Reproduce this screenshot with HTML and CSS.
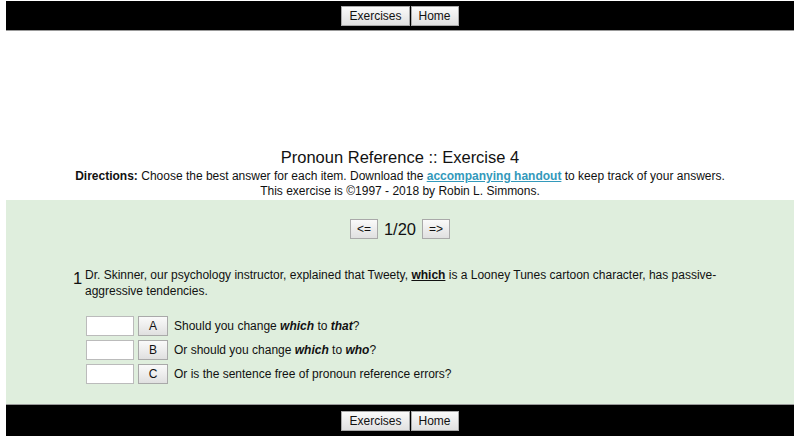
FILE: index.html
```html
<!DOCTYPE html>
<html>
<head>
<meta charset="utf-8">
<link rel="stylesheet" href="styles.css">
</head>
<body>
<div class="page">
  <div class="navbar">
    <button class="btn">Exercises</button><button class="btn">Home</button>
  </div>
  <div class="header">
    <h1 class="title">Pronoun Reference :: Exercise 4</h1>
    <p class="line"><b>Directions:</b> Choose the best answer for each item. Download the <a class="link" href="#">accompanying handout</a> to keep track of your answers.</p>
    <p class="line">This exercise is ©1997 - 2018 by Robin L. Simmons.</p>
  </div>
  <div class="panel">
    <div class="pager">
      <button class="btn small">&lt;=</button>
      <span class="count">1/20</span>
      <button class="btn small">=&gt;</button>
    </div>
    <div class="question">
      <span class="num">1</span>
      <span class="qtext">Dr. Skinner, our psychology instructor, explained that Tweety, <b class="u">which</b> is a Looney Tunes cartoon character, has passive-aggressive tendencies.</span>
    </div>
    <div class="answers">
      <div class="row"><input class="box" type="text"><button class="btn letter">A</button><span class="opt">Should you change <b><i>which</i></b> to <b><i>that</i></b>?</span></div>
      <div class="row"><input class="box" type="text"><button class="btn letter">B</button><span class="opt">Or should you change <b><i>which</i></b> to <b><i>who</i></b>?</span></div>
      <div class="row"><input class="box" type="text"><button class="btn letter">C</button><span class="opt">Or is the sentence free of pronoun reference errors?</span></div>
    </div>
  </div>
  <div class="navbar bottom">
    <button class="btn">Exercises</button><button class="btn">Home</button>
  </div>
</div>
</body>
</html>
```
FILE: styles.css
```css
html, body {
  margin: 0;
  padding: 0;
  background: #fff;
}
body {
  font-family: "Liberation Sans", Arial, sans-serif;
  font-size: 12px;
  color: #111;
}
.page {
  padding: 1px 6px 0 6px;
}
.navbar {
  background: #000;
  height: 29px;
  border-bottom: 1px solid #999;
  display: flex;
  justify-content: center;
  align-items: center;
}
.navbar.bottom {
  border-bottom: none;
  border-top: 1px solid #999;
  height: 31px;
  margin-top: 0;
}
.btn {
  font-family: "Liberation Sans", Arial, sans-serif;
  font-size: 12px;
  color: #111;
  background: linear-gradient(#fafafa, #e0e0e0);
  border: 1px solid #a9a9a9;
  border-radius: 0;
  height: 20px;
  padding: 0 7px;
  margin: 0;
  line-height: 18px;
}
.navbar .btn + .btn {
  margin-left: 1px;
}
.header {
  text-align: center;
  padding-top: 116px;
  height: 169px;
  box-sizing: border-box;
}
.title {
  font-weight: normal;
  font-size: 16.5px;
  line-height: 20px;
  margin: 0 0 2px 0;
  color: #111;
}
.line {
  margin: 0;
  line-height: 15px;
}
.link {
  color: #3399bb;
  font-weight: bold;
  text-decoration: underline;
}
.panel {
  background: #dfeedd;
  height: 204px;
  box-sizing: border-box;
  padding-top: 19px;
}
.pager {
  display: flex;
  justify-content: center;
  align-items: center;
  gap: 6px;
}
.btn.small {
  width: 28px;
  padding: 0;
}
.count {
  font-size: 16.5px;
  line-height: 20px;
}
.question {
  display: flex;
  align-items: flex-start;
  margin: 28px 0 0 67px;
  width: 660px;
}
.num {
  font-size: 16.5px;
  line-height: 20px;
  width: 12px;
  flex: none;
  margin-top: 1px;
}
.qtext {
  line-height: 16px;
  display: block;
}
.u {
  text-decoration: underline;
}
.answers {
  margin: 17px 0 0 80px;
  display: flex;
  flex-direction: column;
  gap: 4px;
}
.row {
  display: flex;
  align-items: center;
  height: 20px;
}
.box {
  width: 48px;
  height: 20px;
  box-sizing: border-box;
  border: 1px solid #bbb;
  background: #fff;
  margin: 0;
  padding: 0;
}
.btn.letter {
  width: 30px;
  padding: 0;
  margin-left: 4px;
}
.opt {
  margin-left: 6px;
}
```
